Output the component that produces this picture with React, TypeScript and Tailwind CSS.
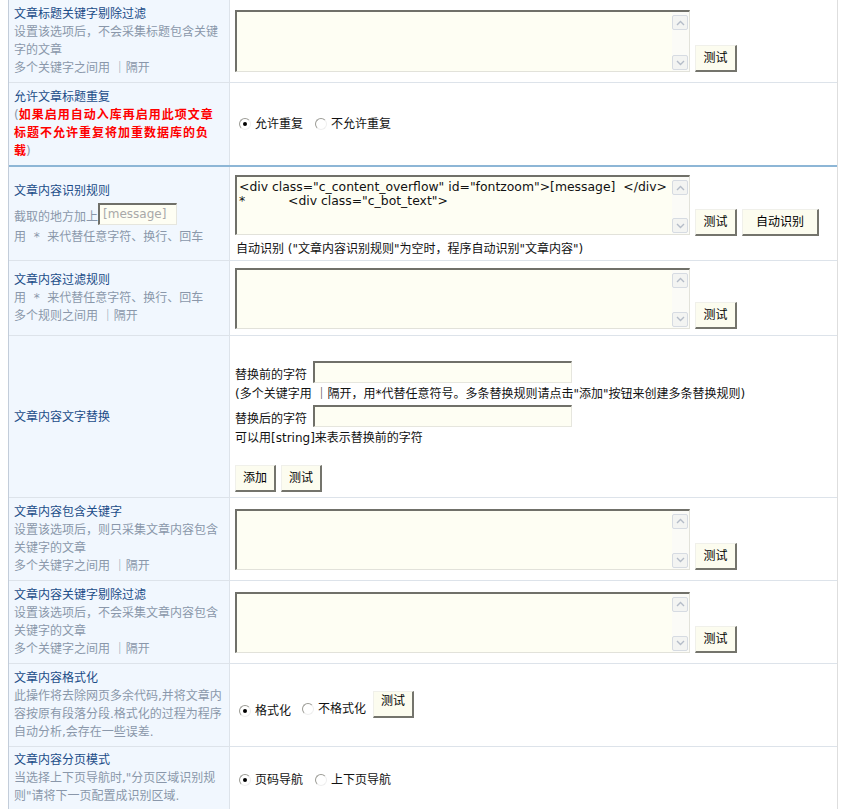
import React from 'react';

const font = 'font-["DejaVu_Sans","Noto_Sans_CJK_SC",sans-serif]';

const Chevron = ({ up }: { up?: boolean }) => (
  <svg width="9" height="6" viewBox="0 0 9 6" className="block">
    <path d={up ? 'M1 5 L4.5 1.5 L8 5' : 'M1 1 L4.5 4.5 L8 1'} fill="none" stroke="#b4bcc8" strokeWidth="1.4" />
  </svg>
);

const ScrollBtn = ({ up }: { up?: boolean }) => (
  <div className="w-[16px] h-[15px] rounded-[2px] border border-[#d6dbe2] bg-[#f3f4f2] flex items-center justify-center">
    <Chevron up={up} />
  </div>
);

const Area = ({ h, children }: { h: string; children?: React.ReactNode }) => (
  <div className={`flex w-[455px] ${h} shrink-0 border-t-2 border-l-2 border-b border-r border-t-[#707069] border-l-[#707069] border-b-[#e2e2da] border-r-[#e2e2da] bg-[#fefef3]`}>
    <div className='flex-1 overflow-hidden whitespace-pre pl-[2px] pt-[3px] text-[12.4px] leading-[14px] text-[#111] font-["DejaVu_Sans",sans-serif]'>
      {children}
    </div>
    <div className="w-[17px] flex flex-col justify-between pt-[3px] pb-[1px] bg-[#fbfbf7]">
      <ScrollBtn up />
      <ScrollBtn />
    </div>
  </div>
);

const Btn = ({ w, extra = '', children }: { w: string; extra?: string; children: React.ReactNode }) => (
  <button
    className={`${w} h-[27px] shrink-0 border-t border-l border-b-2 border-r-2 border-t-[#f0f0ea] border-l-[#f0f0ea] border-b-[#74746c] border-r-[#74746c] bg-[#fcfcef] text-[12px] leading-[14px] text-black ${extra}`}
  >
    {children}
  </button>
);

const Field = ({ w, placeholder }: { w: string; placeholder?: string }) => (
  <div className={`${w} h-[22px] shrink-0 border-t-2 border-l-2 border-b border-r border-t-[#707069] border-l-[#707069] border-b-[#e6e6de] border-r-[#e6e6de] bg-[#fefef3] pl-[3px] text-[12px] leading-[18px] text-[#a9a9a9]`}>
    {placeholder}
  </div>
);

const Radio = ({ checked, label }: { checked?: boolean; label: string }) => (
  <span className="inline-flex items-center">
    <span className="w-[12px] h-[12px] rounded-full border border-t-[#9b9b95] border-l-[#9b9b95] border-b-[#efefef] border-r-[#efefef] bg-white flex items-center justify-center">
      {checked && <span className="w-[4px] h-[4px] rounded-full bg-black" />}
    </span>
    <span className="ml-[4px] text-[#111]">{label}</span>
  </span>
);

const Title = ({ children }: { children: React.ReactNode }) => (
  <div className="text-[#1b4c88]">{children}</div>
);

const Desc = ({ children }: { children: React.ReactNode }) => (
  <div className="text-[#8a97aa]">{children}</div>
);

const Row = ({
  h,
  line = 'border-b border-b-[#dde3ea]',
  left,
  right,
  rightCls = 'justify-center',
}: {
  h: string;
  line?: string;
  left: React.ReactNode;
  right: React.ReactNode;
  rightCls?: string;
}) => (
  <div className={`flex ${h} ${line}`}>
    <div className="w-[221px] shrink-0 bg-[#f1f7fe] border-r border-r-[#dde3ea] pl-[5px] flex flex-col justify-center whitespace-nowrap">
      {left}
    </div>
    <div className={`flex-1 pl-[5px] flex flex-col ${rightCls}`}>{right}</div>
  </div>
);

export default function App() {
  return (
    <div className={`h-[809px] overflow-hidden bg-white text-[12px] leading-[18px] ${font}`}>
      <div className="ml-[8px] w-[830px] border-l border-l-[#c3cdda] border-r border-r-[#dedede]">
        <Row
          h="h-[83px]"
          left={
            <>
              <Title>文章标题关键字剔除过滤</Title>
              <Desc>设置该选项后，不会采集标题包含关键</Desc>
              <Desc>字的文章</Desc>
              <Desc>多个关键字之间用 ｜隔开</Desc>
            </>
          }
          right={
            <div className="flex items-end gap-[5px]">
              <Area h="h-[62px]" />
              <Btn w="w-[42px]">测试</Btn>
            </div>
          }
        />

        <Row
          h="h-[84px]"
          line="border-b-2 border-b-[#8db6d6]"
          left={
            <>
              <Title>允许文章标题重复</Title>
              <div className="text-[#8a97aa]">
                (<span className="font-bold text-[#ff0000] tracking-[1px]">如果启用自动入库再启用此项文章</span>
              </div>
              <div className="font-bold text-[#ff0000] tracking-[1px]">标题不允许重复将加重数据库的负</div>
              <div className="text-[#8a97aa]">
                <span className="font-bold text-[#ff0000]">载</span>)
              </div>
            </>
          }
          right={
            <div className="flex items-center gap-[12px] pl-[4px]">
              <Radio checked label="允许重复" />
              <Radio label="不允许重复" />
            </div>
          }
        />

        <Row
          h="h-[94px]"
          left={
            <>
              <Title>文章内容识别规则</Title>
              <div className="flex items-end mt-[3px] text-[#8a97aa]">
                <span className="leading-[16px]">截取的地方加上</span>
                <Field w="w-[79px]" placeholder="[message]" />
              </div>
              <div className="mt-[3px] text-[#8a97aa]">用 &nbsp;*&nbsp; 来代替任意字符、换行、回车</div>
            </>
          }
          rightCls="justify-start pt-[8px]"
          right={
            <>
              <div className="flex items-end">
                <Area h="h-[60px]">
                  <div>{'<div class="c_content_overflow" id="fontzoom">[message]  </div>'}</div>
                  <div className="flex">
                    <span className="w-[49px]">*</span>
                    <span>{'<div class="c_bot_text">'}</span>
                  </div>
                </Area>
                <Btn w="w-[42px]" extra="ml-[5px] -mb-[1px]">测试</Btn>
                <Btn w="w-[77px]" extra="ml-[5px] -mb-[1px]">自动识别</Btn>
              </div>
              <div className="mt-[5px] pl-[1px] text-[#111]">自动识别 ("文章内容识别规则"为空时，程序自动识别"文章内容")</div>
            </>
          }
        />

        <Row
          h="h-[75px]"
          left={
            <>
              <Title>文章内容过滤规则</Title>
              <Desc>用 &nbsp;*&nbsp; 来代替任意字符、换行、回车</Desc>
              <Desc>多个规则之间用 ｜隔开</Desc>
            </>
          }
          right={
            <div className="flex items-end gap-[5px]">
              <Area h="h-[61px]" />
              <Btn w="w-[42px]">测试</Btn>
            </div>
          }
        />

        <Row
          h="h-[162px]"
          left={<Title>文章内容文字替换</Title>}
          rightCls="justify-start pt-[25px]"
          right={
            <>
              <div className="flex items-end text-[#111]">
                <span className="leading-[16px] mr-[6px]">替换前的字符</span>
                <Field w="w-[259px]" />
              </div>
              <div className="mt-[2px] text-[#111]">
                (多个关键字用 ｜隔开，用*代替任意符号。多条替换规则请点击"添加"按钮来创建多条替换规则)
              </div>
              <div className="flex items-end mt-[2px] text-[#111]">
                <span className="leading-[16px] mr-[6px]">替换后的字符</span>
                <Field w="w-[259px]" />
              </div>
              <div className="mt-[2px] text-[#111]">可以用[string]来表示替换前的字符</div>
              <div className="flex gap-[5px] mt-[18px]">
                <Btn w="w-[41px]">添加</Btn>
                <Btn w="w-[41px]">测试</Btn>
              </div>
            </>
          }
        />

        <Row
          h="h-[83px]"
          left={
            <>
              <Title>文章内容包含关键字</Title>
              <Desc>设置该选项后，则只采集文章内容包含</Desc>
              <Desc>关键字的文章</Desc>
              <Desc>多个关键字之间用 ｜隔开</Desc>
            </>
          }
          right={
            <div className="flex items-end gap-[5px]">
              <Area h="h-[61px]" />
              <Btn w="w-[42px]">测试</Btn>
            </div>
          }
        />

        <Row
          h="h-[83px]"
          left={
            <>
              <Title>文章内容关键字剔除过滤</Title>
              <Desc>设置该选项后，不会采集文章内容包含</Desc>
              <Desc>关键字的文章</Desc>
              <Desc>多个关键字之间用 ｜隔开</Desc>
            </>
          }
          right={
            <div className="flex items-end gap-[5px]">
              <Area h="h-[61px]" />
              <Btn w="w-[42px]">测试</Btn>
            </div>
          }
        />

        <Row
          h="h-[83px]"
          left={
            <>
              <Title>文章内容格式化</Title>
              <Desc>此操作将去除网页多余代码,并将文章内</Desc>
              <Desc>容按原有段落分段.格式化的过程为程序</Desc>
              <Desc>自动分析,会存在一些误差.</Desc>
            </>
          }
          right={
            <div className="flex items-end pl-[4px]">
              <Radio checked label="格式化" />
              <span className="ml-[11px]">
                <Radio label="不格式化" />
              </span>
              <Btn w="w-[41px]" extra="h-[26px] ml-[7px] mb-[2px] pb-[5px]">测试</Btn>
            </div>
          }
        />

        <Row
          h="h-[62px]"
          line=""
          left={
            <>
              <Title>文章内容分页模式</Title>
              <Desc>当选择上下页导航时,"分页区域识别规</Desc>
              <Desc>则"请将下一页配置成识别区域.</Desc>
            </>
          }
          right={
            <div className="flex items-center gap-[12px] pl-[4px] mt-[4px]">
              <Radio checked label="页码导航" />
              <Radio label="上下页导航" />
            </div>
          }
        />
      </div>
    </div>
  );
}
